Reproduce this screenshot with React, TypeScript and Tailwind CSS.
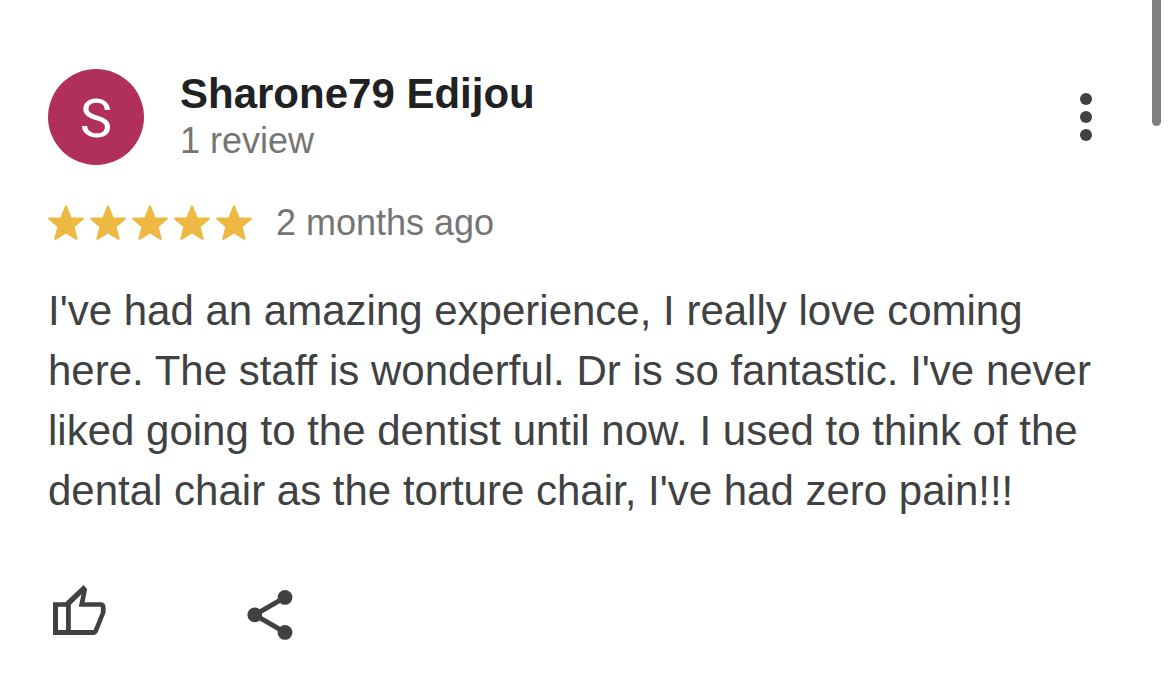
const stars = [1, 2, 3, 4, 5];

function Star() {
  return (
    <svg viewBox="0 0 36 36" className="size-9" aria-hidden="true">
      <path
        d="M18 1.4 22.8 13.6H34.7L25.4 21.6 28.6 33.8 18 27.4 7.4 33.8 10.6 21.6 1.3 13.6H13.2Z"
        fill="#edb943"
        stroke="#edb943"
        strokeWidth="2.2"
        strokeLinejoin="round"
      />
    </svg>
  );
}

function MoreIcon() {
  return (
    <svg viewBox="0 0 12 48" className="h-12 w-3" fill="#404142" aria-hidden="true">
      <circle cx="6" cy="6" r="6" />
      <circle cx="6" cy="24" r="6" />
      <circle cx="6" cy="42" r="6" />
    </svg>
  );
}

function LikeIcon() {
  return (
    <svg viewBox="0 0 56 56" className="size-14" fill="#404142" aria-hidden="true">
      <path
        fillRule="evenodd"
        d="M2 19.2H14.4L32.5 2 35.4 4.9Q36.2 5.8 36 7L33.6 19.2H49.5Q54.6 19.2 54.6 24.5V28.5Q54.6 29.6 54.2 30.6L47 48.6Q45.6 52 42.4 52H2ZM7 23.8V47.1H15V23.8ZM19.8 21.8V47.1H42.6L49.8 29.5V23.8H27.8L30.4 11.2Z"
      />
    </svg>
  );
}

function ShareIcon() {
  return (
    <svg viewBox="0 0 50 60" className="h-[60px] w-[50px]" fill="#404142" aria-hidden="true">
      <path d="M40 14.4 9.8 31.8 40 49.4" fill="none" stroke="#404142" strokeWidth="5" />
      <circle cx="40" cy="14.4" r="7.4" />
      <circle cx="9.8" cy="31.8" r="7.4" />
      <circle cx="40" cy="49.4" r="7.4" />
    </svg>
  );
}

export default function App() {
  return (
    <main className="relative min-h-screen bg-white font-['Liberation_Sans',Arial,sans-serif]">
      <article className="pt-[69px] pr-[72px] pb-11 pl-12">
        <header className="flex items-center">
          <div className="flex size-24 shrink-0 items-center justify-center rounded-full bg-[#b12f5b] pt-1 font-[Roboto,sans-serif] text-[54px] leading-none text-white">
            S
          </div>
          <div className="ml-9 flex-1">
            <h1 className="text-[42px] leading-12 font-bold text-[#202122]">Sharone79 Edijou</h1>
            <p className="text-4xl leading-[46px] text-[#757575]">1 review</p>
          </div>
          <button type="button" aria-label="More options" className="px-1.5">
            <MoreIcon />
          </button>
        </header>

        {/* Rating */}
        <div className="mt-[34px] flex items-center">
          <div className="flex gap-1.5" role="img" aria-label="5 stars">
            {stars.map((star) => (
              <Star key={star} />
            ))}
          </div>
          <span className="ml-6 text-4xl leading-12 text-[#757575]">2 months ago</span>
        </div>

        <p className="mt-[34px] text-[42px] leading-[60px] text-[#404142]">
          I've had an amazing experience, I really love coming here. The staff is wonderful. Dr is so
          fantastic. I've never liked going to the dentist until now. I used to think of the dental
          chair as the torture chair, I've had zero pain!!!
        </p>

        {/* Actions */}
        <div className="mt-[62px] ml-[3px] flex items-start gap-[138px]">
          <button type="button" aria-label="Like">
            <LikeIcon />
          </button>
          <button type="button" aria-label="Share">
            <ShareIcon />
          </button>
        </div>
      </article>

      {/* Scroll thumb */}
      <div className="absolute top-0 right-[9px] h-[126px] w-[9px] rounded-b-full bg-[#808080]" />
    </main>
  );
}
